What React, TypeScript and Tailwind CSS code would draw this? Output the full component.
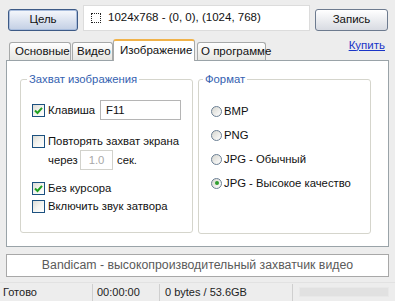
import React from "react";

const font = { fontFamily: '"Liberation Sans", Arial, sans-serif' };

function CheckBox({ checked }: { checked?: boolean }) {
  return (
    <span className="flex h-[13px] w-[13px] shrink-0 items-center justify-center border border-[#1c5180] bg-gradient-to-br from-[#dcdcd6] via-[#f4f4f0] to-white">
      {checked && (
        <svg width="9" height="9" viewBox="0 0 9 9">
          <path d="M1 4.5 L3.5 7 L8 1.8" fill="none" stroke="#21a121" strokeWidth="2" />
        </svg>
      )}
    </span>
  );
}

function Radio({ checked }: { checked?: boolean }) {
  return (
    <span className="flex h-[11px] w-[11px] shrink-0 items-center justify-center rounded-full border border-[#6b7f94] bg-gradient-to-br from-[#d6d6d0] to-white">
      {checked && <span className="h-[4px] w-[4px] rounded-full bg-[#2f9e2f]" />}
    </span>
  );
}

const formats = [
  { label: "BMP", checked: false },
  { label: "PNG", checked: false },
  { label: "JPG - Обычный", checked: false },
  { label: "JPG - Высокое качество", checked: true },
];

export default function App() {
  return (
    <div style={font} className="flex h-[301px] w-[395px] flex-col overflow-hidden whitespace-nowrap bg-[#ededed] text-[11.3px] text-[#111]">
      {/* top row */}
      <div className="flex items-start pl-[8px] pt-[5px]">
        <button className="mt-[4px] h-[22px] w-[70px] rounded-[3px] border border-[#3d5a86] bg-gradient-to-b from-[#f6f8fc] to-[#c3cfe4] text-[11.5px] shadow-[inset_0_0_0_1px_#a9bddd]">
          Цель
        </button>
        <div className="ml-[5px] flex h-[26px] w-[227px] items-center border border-[#dcdcdc] bg-white pl-[7px] text-[11.5px]">
          <span className="h-[10px] w-[10px] border border-dotted border-[#222]" />
          <span className="ml-[7px]">1024x768 - (0, 0), (1024, 768)</span>
        </div>
        <button className="ml-[5px] mt-[4px] h-[22px] w-[73px] rounded-[3px] border border-[#6d7b8f] bg-gradient-to-b from-white to-[#d8dbe2] text-[11.5px]">
          Запись
        </button>
      </div>

      {/* tabs */}
      <div className="relative z-10 mt-[8px] flex h-[21px] items-end pl-[9px] pr-[10px] text-[11.5px]">
        <div className="flex h-[18px] w-[62px] items-center rounded-t-[3px] border border-b-0 border-[#a7a9a9] bg-gradient-to-b from-white to-[#e6e6e2] pl-[5px]">
          Основные
        </div>
        <div className="ml-[1px] flex h-[18px] w-[41px] items-center rounded-t-[3px] border border-b-0 border-[#a7a9a9] bg-gradient-to-b from-white to-[#e6e6e2] pl-[4px]">
          Видео
        </div>
        <div className="-mb-px flex h-[22px] w-[82px] items-center rounded-t-[3px] border border-b-0 border-[#a7a9a9] border-t-[2px] border-t-[#f0b24a] bg-white pl-[6px]">
          Изображение
        </div>
        <div className="ml-[2px] flex h-[18px] w-[69px] items-center rounded-t-[3px] border border-b-0 border-[#a7a9a9] bg-gradient-to-b from-white to-[#e6e6e2] pl-[3px]">
          О программе
        </div>
        <a className="mb-[6px] ml-auto text-[#1a35c8] underline">Купить</a>
      </div>

      {/* panel */}
      <div className="mx-[6px] flex h-[187px] w-[383px] border border-[#9aa3a8] bg-white pl-[13px] pt-[18px]">
        <div className="relative flex h-[154px] w-[173px] flex-col rounded-[3px] border border-[#d5d5cc] pl-[11px]">
          <span className="absolute -top-[8px] left-[6px] bg-white px-[2px] leading-[14px] text-[#3461b0]">Захват изображения</span>
          <div className="mt-[20px] flex h-[20px] items-center">
            <CheckBox checked />
            <span className="ml-[3px] w-[52px]">Клавиша</span>
            <span className="flex h-[20px] w-[81px] items-center border border-[#b5b5b5] pl-[5px]">F11</span>
          </div>
          <div className="mt-[14px] flex h-[14px] items-center">
            <CheckBox />
            <span className="ml-[3px]">Повторять захват экрана</span>
          </div>
          <div className="mt-[2px] flex h-[20px] items-center pl-[16px]">
            <span className="w-[32px]">через</span>
            <span className="flex h-[20px] w-[33px] items-center justify-center border border-[#d2d2cc] text-[#a8a8a8]">1.0</span>
            <span className="ml-[4px]">сек.</span>
          </div>
          <div className="mt-[11px] flex h-[14px] items-center">
            <CheckBox checked />
            <span className="ml-[3px]">Без курсора</span>
          </div>
          <div className="mt-[4px] flex h-[14px] items-center">
            <CheckBox />
            <span className="ml-[3px]">Включить звук затвора</span>
          </div>
        </div>

        <div className="relative ml-[5px] flex h-[155px] w-[173px] flex-col rounded-[3px] border border-[#d5d5cc] pl-[12px] pt-[14px]">
          <span className="absolute -top-[8px] left-[4px] bg-white px-[2px] leading-[14px] text-[#3461b0]">Формат</span>
          {formats.map((f) => (
            <div key={f.label} className="mt-[10px] flex h-[14px] items-center">
              <Radio checked={f.checked} />
              <span className="ml-[2px]">{f.label}</span>
            </div>
          ))}
        </div>
      </div>

      {/* info box */}
      <div className="mx-[6px] mt-[7px] flex h-[23px] w-[383px] items-center justify-center border border-[#a8a8a8] bg-white text-[12.3px] text-[#5a5a5a]">
        Bandicam - высокопроизводительный захватчик видео
      </div>

      {/* status bar */}
      <div className="mt-[5px] flex h-[19px] items-center border-t border-[#e2e2e2] text-[11px] text-[#222]">
        <span className="w-[92px] pl-[3px]">Готово</span>
        <span className="h-[17px] w-px bg-[#cfcfcf]" />
        <span className="w-[66px] pl-[4px]">00:00:00</span>
        <span className="h-[17px] w-px bg-[#cfcfcf]" />
        <span className="w-[132px] pl-[5px]">0 bytes / 53.6GB</span>
        <span className="h-[17px] w-px bg-[#cfcfcf]" />
        <span className="ml-[6px] h-[10px] w-[90px] border border-[#e8e8e8] bg-[#e1e1e1]" />
      </div>
    </div>
  );
}
